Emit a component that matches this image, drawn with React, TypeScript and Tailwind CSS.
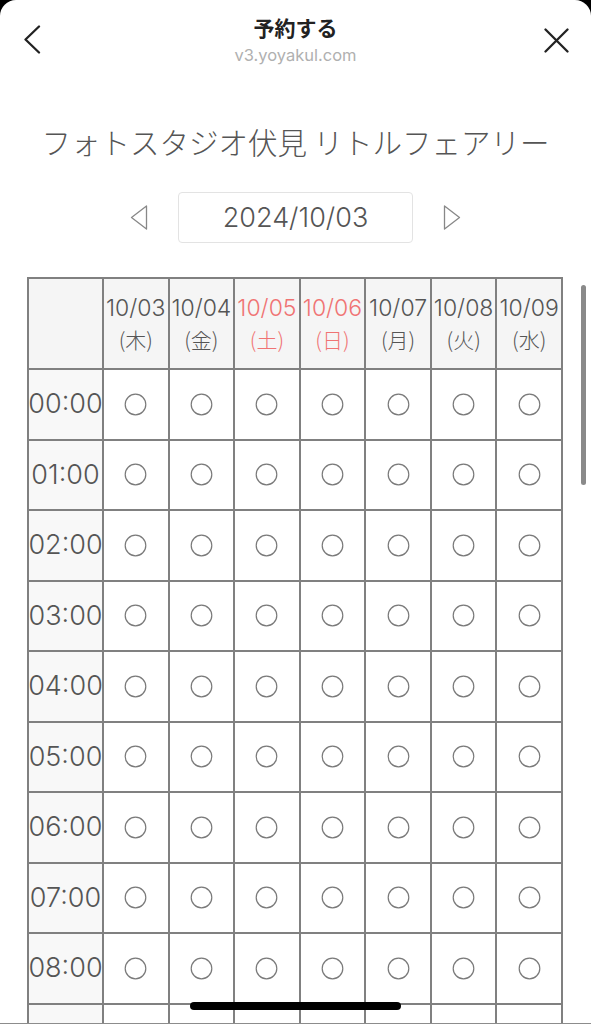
import { memo } from 'react'

const days = [
  { date: '10/03', dow: '木', red: false },
  { date: '10/04', dow: '金', red: false },
  { date: '10/05', dow: '土', red: true },
  { date: '10/06', dow: '日', red: true },
  { date: '10/07', dow: '月', red: false },
  { date: '10/08', dow: '火', red: false },
  { date: '10/09', dow: '水', red: false },
]

const hours = Array.from({ length: 24 }, (_, i) => `${String(i).padStart(2, '0')}:00`)

const jp = { fontFamily: '"Noto Sans CJK JP", "Noto Sans", sans-serif' }
const num = { fontFamily: 'Inter, "Noto Sans CJK JP", sans-serif' }

function Circle() {
  return (
    <svg width="23" height="23" viewBox="0 0 23 23">
      <circle cx="11.5" cy="11.5" r="10.3" fill="none" stroke="#7a7a7a" strokeWidth="1.2" />
    </svg>
  )
}

function App() {
  return (
    <div className="bg-black h-[1024px] overflow-hidden" style={jp}>
      <div className="bg-white rounded-t-[16px] h-full relative">
        {/* Header */}
        <div className="grid grid-cols-[70px_1fr_70px] h-[65px]">
          <button className="pl-[23px] pt-[25px] self-start">
            <svg width="18" height="29" viewBox="0 0 18 29">
              <polyline points="16,1.5 2.5,14.5 16,27.5" fill="none" stroke="#222" strokeWidth="2.3" strokeLinecap="round" strokeLinejoin="round" />
            </svg>
          </button>
          <div className="flex flex-col items-center pt-[12px]">
            <div className="text-[21px] leading-[30px] font-bold text-[#222]">予約する</div>
            <div className="text-[16.5px] leading-[20px] mt-[3px] text-[#b0b0b0]" style={{ fontFamily: 'Inter, "Liberation Sans", sans-serif' }}>
              v3.yoyakul.com
            </div>
          </div>
          <button className="flex justify-end pr-[22px] pt-[28px] self-start">
            <svg width="25" height="25" viewBox="0 0 25 25">
              <path d="M1.5 1.5 L23.5 23.5 M23.5 1.5 L1.5 23.5" stroke="#222" strokeWidth="2.3" strokeLinecap="round" />
            </svg>
          </button>
        </div>

        {/* Studio name */}
        <h1 className="mt-[56px] text-center text-[29.5px] leading-[40px] font-light text-[#555]">
          フォトスタジオ伏見 リトルフェアリー
        </h1>

        {/* Date selector */}
        <div className="mt-[31px] flex items-center justify-center gap-[30px]">
          <svg width="18" height="25" viewBox="0 0 18 25">
            <polygon points="16.5,1 1.5,12.5 16.5,24" fill="none" stroke="#888" strokeWidth="1.3" strokeLinejoin="round" />
          </svg>
          <div className="w-[235px] h-[51px] pt-[2px] border border-[#e3e3e3] rounded-[4px] flex items-center justify-center text-[27px] font-light text-[#555]" style={num}>
            2024/10/03
          </div>
          <svg width="18" height="25" viewBox="0 0 18 25">
            <polygon points="1.5,1 16.5,12.5 1.5,24" fill="none" stroke="#888" strokeWidth="1.3" strokeLinejoin="round" />
          </svg>
        </div>

        {/* Schedule table */}
        <div className="mt-[34px] ml-[27px] w-[536px] grid grid-cols-[75px_repeat(7,minmax(0,1fr))] border-l-2 border-t-2 border-[#808080]">
          <div className="h-[91px] bg-[#f5f5f5] border-r-2 border-b-2 border-[#808080]" />
          {days.map((d) => (
            <div
              key={d.date}
              className={`h-[91px] bg-[#f5f5f5] border-r-2 border-b-2 border-[#808080] flex flex-col items-center justify-center leading-[31px] whitespace-nowrap ${d.red ? 'text-[#f07373]' : 'text-[#555]'}`}
            >
              <span className="-mx-2 text-[23px] font-light" style={num}>{d.date}</span>
              <span className="text-[21px] font-light">({d.dow})</span>
            </div>
          ))}
          {hours.map((h) => (
            <div key={h} className="contents">
              <div className="h-[70.5px] bg-[#f8f8f8] border-r-2 border-b-2 border-[#808080] flex items-center justify-center overflow-hidden">
                <span className="text-[27px] font-light text-[#555] whitespace-nowrap" style={num}>{h}</span>
              </div>
              {days.map((d) => (
                <div key={d.date} className="h-[70.5px] border-r-2 border-b-2 border-[#808080] flex items-center justify-center">
                  <Circle />
                </div>
              ))}
            </div>
          ))}
        </div>

        {/* Scroll indicator */}
        <div className="absolute left-[581px] top-[285px] w-[5px] h-[200px] rounded-full bg-[#8a8a8a]" />

        {/* Home indicator */}
        <div className="absolute left-[190px] top-[1002px] w-[211px] h-[8px] rounded-full bg-black" />
        <div className="absolute left-0 bottom-0 w-full h-px bg-[#8c8c8c]" />
      </div>
    </div>
  )
}

export default memo(App)
